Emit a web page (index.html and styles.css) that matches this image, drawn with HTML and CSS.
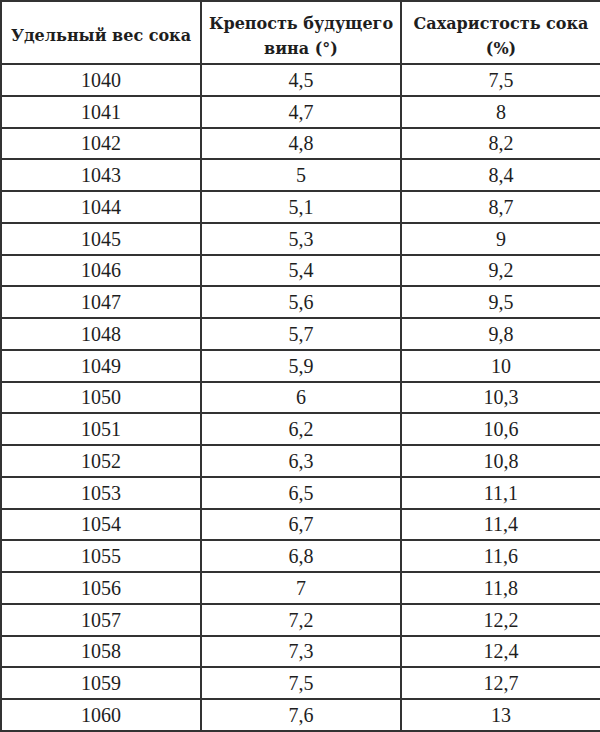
FILE: index.html
```html
<!DOCTYPE html>
<html lang="ru">
<head>
<meta charset="utf-8">
<link rel="stylesheet" href="styles.css">
</head>
<body>
<table class="tbl">
<colgroup><col class="c"><col class="c"><col class="c"></colgroup>
<thead>
<tr><th>Удельный вес сока</th><th>Крепость будущего вина (°)</th><th>Сахаристость сока (%)</th></tr>
</thead>
<tbody>
<tr><td>1040</td><td>4,5</td><td>7,5</td></tr>
<tr><td>1041</td><td>4,7</td><td>8</td></tr>
<tr><td>1042</td><td>4,8</td><td>8,2</td></tr>
<tr><td>1043</td><td>5</td><td>8,4</td></tr>
<tr><td>1044</td><td>5,1</td><td>8,7</td></tr>
<tr><td>1045</td><td>5,3</td><td>9</td></tr>
<tr><td>1046</td><td>5,4</td><td>9,2</td></tr>
<tr><td>1047</td><td>5,6</td><td>9,5</td></tr>
<tr><td>1048</td><td>5,7</td><td>9,8</td></tr>
<tr><td>1049</td><td>5,9</td><td>10</td></tr>
<tr><td>1050</td><td>6</td><td>10,3</td></tr>
<tr><td>1051</td><td>6,2</td><td>10,6</td></tr>
<tr><td>1052</td><td>6,3</td><td>10,8</td></tr>
<tr><td>1053</td><td>6,5</td><td>11,1</td></tr>
<tr><td>1054</td><td>6,7</td><td>11,4</td></tr>
<tr><td>1055</td><td>6,8</td><td>11,6</td></tr>
<tr><td>1056</td><td>7</td><td>11,8</td></tr>
<tr><td>1057</td><td>7,2</td><td>12,2</td></tr>
<tr><td>1058</td><td>7,3</td><td>12,4</td></tr>
<tr><td>1059</td><td>7,5</td><td>12,7</td></tr>
<tr><td>1060</td><td>7,6</td><td>13</td></tr>
</tbody>
</table>
</body>
</html>
```
FILE: styles.css
```css
html, body {
  margin: 0;
  padding: 0;
  background: #fff;
}
.tbl {
  width: 600px;
  border-collapse: collapse;
  table-layout: fixed;
  color: #1e1e1e;
  font-family: "Liberation Serif", serif;
}
.c { width: 200px; }
.tbl th, .tbl td {
  border: 2px solid #333;
  padding: 0 6px;
  text-align: center;
  vertical-align: middle;
}
.tbl th {
  height: 55px;
  padding-top: 6px;
  font-family: "DejaVu Serif", serif;
  font-size: 16px;
  font-weight: bold;
  line-height: 25px;
}
.tbl td {
  height: 29.75px;
  font-size: 20px;
  line-height: 24px;
}
```
